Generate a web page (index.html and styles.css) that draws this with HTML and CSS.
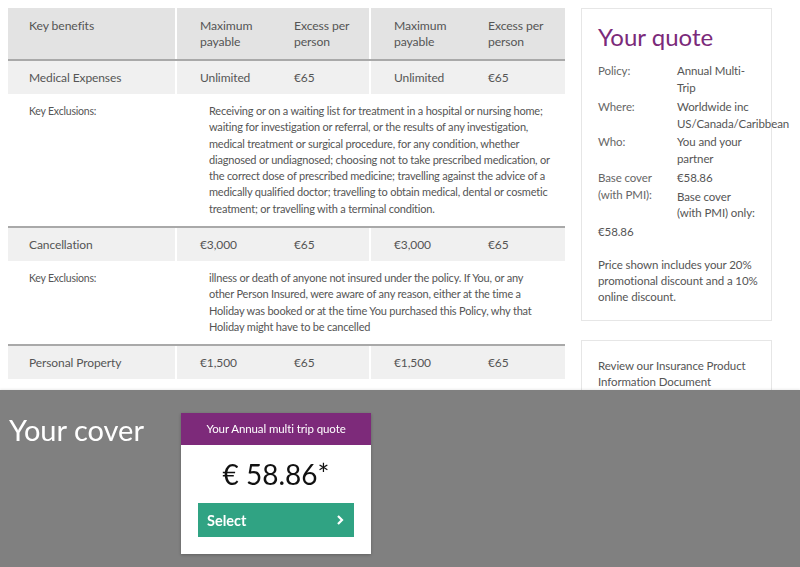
FILE: index.html
```html
<!DOCTYPE html>
<html lang="en">
<head>
<meta charset="utf-8">
<title>Your quote</title>
<link rel="stylesheet" href="styles.css">
</head>
<body>
<div class="page">
  <main class="content">
    <table class="benefits">
      <colgroup>
        <col class="c1"><col class="c2"><col class="c3"><col class="c4"><col class="c5">
      </colgroup>
      <thead>
        <tr>
          <th>Key benefits</th>
          <th class="grp">Maximum payable</th>
          <th>Excess per person</th>
          <th class="grp">Maximum payable</th>
          <th>Excess per person</th>
        </tr>
      </thead>
      <tbody>
        <tr class="benefit">
          <td>Medical Expenses</td>
          <td class="grp">Unlimited</td>
          <td>€65</td>
          <td class="grp">Unlimited</td>
          <td>€65</td>
        </tr>
        <tr class="excl">
          <td>Key Exclusions:</td>
          <td colspan="4" class="excl-text">Receiving or on a waiting list for treatment in a hospital or nursing home;<br>waiting for investigation or referral, or the results of any investigation,<br>medical treatment or surgical procedure, for any condition, whether<br>diagnosed or undiagnosed; choosing not to take prescribed medication, or<br>the correct dose of prescribed medicine; travelling against the advice of a<br>medically qualified doctor; travelling to obtain medical, dental or cosmetic<br>treatment; or travelling with a terminal condition.</td>
        </tr>
        <tr class="benefit">
          <td>Cancellation</td>
          <td class="grp">€3,000</td>
          <td>€65</td>
          <td class="grp">€3,000</td>
          <td>€65</td>
        </tr>
        <tr class="excl">
          <td>Key Exclusions:</td>
          <td colspan="4" class="excl-text">illness or death of anyone not insured under the policy. If You, or any<br>other Person Insured, were aware of any reason, either at the time a<br>Holiday was booked or at the time You purchased this Policy, why that<br>Holiday might have to be cancelled</td>
        </tr>
        <tr class="benefit">
          <td>Personal Property</td>
          <td class="grp">€1,500</td>
          <td>€65</td>
          <td class="grp">€1,500</td>
          <td>€65</td>
        </tr>
      </tbody>
    </table>
  </main>
  <aside class="side">
    <section class="quote-box">
      <h1 class="quote-title">Your quote</h1>
      <dl class="facts">
        <dt>Policy:</dt><dd>Annual Multi-Trip</dd>
        <dt>Where:</dt><dd>Worldwide inc US/Canada/Caribbean</dd>
        <dt>Who:</dt><dd>You and your partner</dd>
        <dt>Base cover (with PMI):</dt><dd>€58.86<span class="sub">Base cover (with PMI) only:</span></dd>
      </dl>
      <p class="total">€58.86</p>
      <p class="note">Price shown includes your 20%<br>promotional discount and a 10%<br>online discount.</p>
    </section>
    <section class="doc-box">
      <p>Review our Insurance Product Information Document</p>
    </section>
  </aside>
</div>
<footer class="cover-bar">
  <h2 class="cover-title">Your cover</h2>
  <div class="quote-card">
    <div class="card-head">Your Annual multi trip quote</div>
    <div class="card-body">
      <div class="price">€ 58.86*</div>
      <button class="select-btn" type="button"><span>Select</span>
        <svg width="10" height="12" viewBox="0 0 10 12" aria-hidden="true"><path d="M3 2 L7 6 L3 10" fill="none" stroke="#fff" stroke-width="2.2"/></svg>
      </button>
    </div>
  </div>
</footer>
</body>
</html>
```

FILE: styles.css
```css
* { box-sizing: border-box; }
html, body { margin: 0; padding: 0; }
body {
  font-family: Lato, "Liberation Sans", sans-serif;
  color: #555;
  background: #fff;
  padding: 8px;
  overflow: hidden;
  height: 567px;
}
.page {
  display: flex;
  align-items: flex-start;
  gap: 16px;
}
.content { width: 557px; flex: none; }
.benefits {
  width: 557px;
  border-collapse: collapse;
  table-layout: fixed;
}
.c1 { width: 168px; }
.c2 { width: 95px; }
.c3 { width: 99px; }
.c4 { width: 95px; }
.c5 { width: 100px; }
.benefits th, .benefits td {
  text-align: left;
  vertical-align: top;
  padding: 0 4px 0 23px;
}
.benefits th:first-child, .benefits td:first-child { padding-left: 21px; }
.benefits .grp { border-left: 2px solid #fff; padding-left: 23px; }
.benefits thead th {
  background: #e3e3e3;
  font-weight: 400;
  font-size: 12.2px;
  letter-spacing: -0.1px;
  line-height: 16px;
  padding-top: 10px;
  padding-bottom: 9px;
  height: 52px;
  border-bottom: 2px solid #a9a9a9;
}
.benefit td {
  background: #f0f0f0;
  font-size: 12px;
  letter-spacing: -0.1px;
  line-height: 16px;
  height: 34px;
  vertical-align: middle;
}
.excl td {
  font-size: 11px;
  letter-spacing: -0.2px;
  line-height: 16.3px;
  padding-top: 9px;
  padding-bottom: 9px;
  background: #fff;
}
.excl td:first-child { font-size: 10.5px; }
.excl td.excl-text { padding-left: 33px; padding-right: 8px; }
.excl + .benefit td { border-top: 2px solid #a9a9a9; }

.side { width: 191px; flex: none; display: flex; flex-direction: column; gap: 19px; }
.quote-box, .doc-box {
  border: 1px solid #e6e6e6;
  padding: 13px 10px 15px 16px;
  font-size: 11.5px;
  letter-spacing: -0.1px;
}
.quote-title {
  margin: 0 0 10px;
  font-weight: 400;
  font-size: 24px;
  letter-spacing: 0;
  line-height: 30px;
  color: #7b2a7a;
}
.facts {
  margin: 0;
  display: grid;
  grid-template-columns: 79px 79px;
  row-gap: 1.5px;
  line-height: 17px;
}
.facts dt { color: #666; }
.facts dd { margin: 0; }
.facts .sub { display: block; margin-top: 3px; line-height: 16px; }
.total { margin: 2px 0 17px; line-height: 17px; }
.note { margin: 0; line-height: 16px; }
.doc-box { padding-top: 17px; }
.doc-box p { margin: 0; line-height: 16px; }

.cover-bar {
  position: fixed;
  left: 0; right: 0; bottom: 0;
  height: 177px;
  background: #808080;
  display: flex;
  align-items: flex-start;
  padding: 23px 0 0 9px;
  box-shadow: 0 -1px 2px rgba(0,0,0,0.08);
}
.cover-title {
  margin: 0;
  width: 172px;
  font-weight: 400;
  font-size: 29px;
  line-height: 34px;
  color: #fff;
}
.quote-card {
  width: 190px;
  background: #fff;
  box-shadow: 0 1px 3px rgba(0,0,0,0.25);
}
.card-head {
  background: #7d2a7a;
  color: #fff;
  font-size: 11.5px;
  letter-spacing: -0.1px;
  height: 32px;
  line-height: 32px;
  text-align: center;
}
.card-body { padding: 13px 17px 17px; }
.price {
  text-align: center;
  color: #111;
  font-size: 28px;
  line-height: 32px;
  margin-bottom: 13px;
}
.select-btn {
  display: flex;
  align-items: center;
  justify-content: space-between;
  width: 156px;
  height: 34px;
  border: 0;
  background: #30a383;
  color: #fff;
  font-family: inherit;
  font-weight: 700;
  font-size: 14.5px;
  padding: 0 9px 0 9px;
  cursor: pointer;
}
```
